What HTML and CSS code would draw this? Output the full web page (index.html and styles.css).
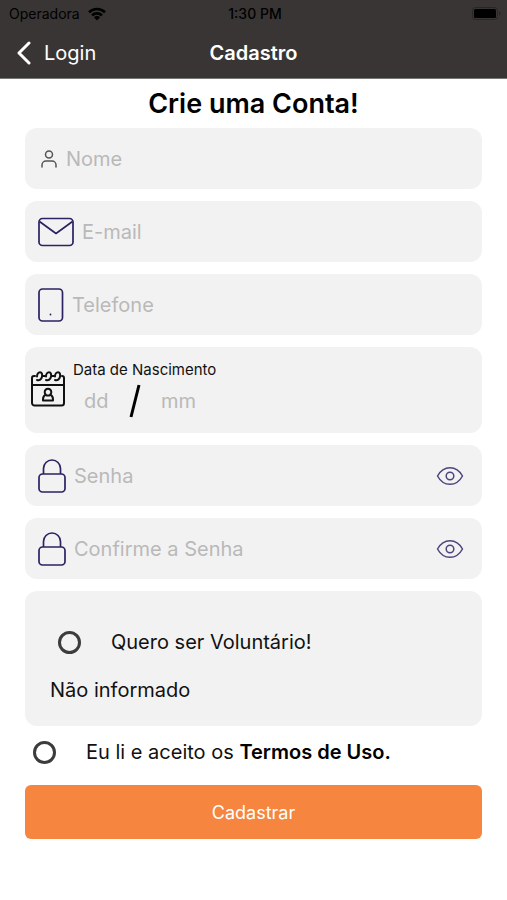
FILE: index.html
```
<!DOCTYPE html>
<html lang="pt-BR">
<head>
    <meta charset="UTF-8">
    <meta name="viewport" content="width=device-width, initial-scale=1.0">
    <title>Cadastro</title>
    <link rel="stylesheet" href="styles.css">
</head>
<body>
    <header class="top">
        <div class="status-bar">
            <span class="carrier">
                Operadora
                <svg width="18" height="14" viewBox="0 0 18 14" fill="none" stroke="currentColor" stroke-width="2.6">
                    <path d="M1 5.2a11.5 11.5 0 0 1 16 0"/>
                    <path d="M4 8.4a7.2 7.2 0 0 1 10 0"/>
                    <path d="M9 13.4L5.9 10.3a4.4 4.4 0 0 1 6.2 0z" fill="currentColor" stroke="none"/>
                </svg>
            </span>
            <span class="time">1:30 PM</span>
            <svg class="battery" width="29" height="14" viewBox="0 0 29 14">
                <rect x="0.5" y="0.5" width="25" height="12" rx="3" fill="none" stroke="#292625"/>
                <rect x="2" y="2" width="22" height="9" rx="1.5" fill="#000"/>
                <path d="M27 4.5c2 .5 2 3.500 0 4z" fill="#292625"/>
            </svg>
        </div>
        <nav class="nav-bar">
            <a href="#login" class="back">
                <svg width="16" height="24" viewBox="0 0 16 24" fill="none" stroke="currentColor" stroke-width="3" stroke-linecap="round" stroke-linejoin="round">
                    <path d="M13 2L3 12l10 10"/>
                </svg>
                Login
            </a>
            <h2>Cadastro</h2>
        </nav>
    </header>

    <main>
        <h1>Crie uma Conta!</h1>
        <form class="form">
            <div class="field">
                <svg class="icon-user" width="18" height="18" viewBox="0 0 18 18" fill="none" stroke="#555" stroke-width="1.5" stroke-linecap="round">
                    <circle cx="9" cy="4.500" r="3.500"/>
                    <path d="M2 17v-2a4 4 0 0 1 4-4h6a4 4 0 0 1 4 4v2"/>
                </svg>
                <input type="text" placeholder="Nome" aria-label="Nome">
            </div>

            <div class="field">
                <svg class="icon-mail" width="36" height="30" viewBox="0 0 36 30" fill="none" stroke="#2b2363" stroke-width="1.7" stroke-linejoin="round">
                    <rect x="1" y="1.500" width="34" height="27" rx="3.500"/>
                    <path d="M1.500 4.500L18 16.500 34.500 4.500"/>
                </svg>
                <input type="email" placeholder="E-mail" aria-label="E-mail">
            </div>

            <div class="field">
                <svg class="icon-phone" width="26" height="34" viewBox="0 0 26 34" fill="none" stroke="#2b2363" stroke-width="1.7">
                    <rect x="1" y="1" width="23.500" height="32" rx="3.500"/>
                    <circle cx="12.500" cy="26.500" r="0.900" fill="#2b2363" stroke="none"/>
                </svg>
                <input type="tel" placeholder="Telefone" aria-label="Telefone">
            </div>

            <div class="field birth">
                <svg width="34" height="36" viewBox="0 0 34 36" fill="none" stroke="#111" stroke-width="2" stroke-linecap="round" stroke-linejoin="round">
                    <path d="M4 5H3a2 2 0 0 0-2 2v25a2.500 2.500 0 0 0 2.500 2.500h27A2.500 2.500 0 0 0 33 32V7a2 2 0 0 0-2-2M1 14h32"/>
                    <path d="M12 5h2M21 5h2"/>
                    <path d="M6 5.500C6 3 7.500 1.300 9 1.300c2 0 2.500 2.200 2 4.500-.5 2.500-2.500 4-5 3.200"/>
                    <path d="M15 5.500c0-2.500 1.500-4.200 3-4.200 2 0 2.500 2.200 2 4.500-.5 2.500-2.500 4-5 3.200"/>
                    <path d="M24 5.500c0-2.500 1.500-4.200 3-4.200 2 0 2.500 2.200 2 4.500-.5 2.500-2.500 4-5 3.200"/>
                    <path d="M14.800 23.500a3.300 3.300 0 1 1 4.400 0c2 1 3 3 2.800 6H12c-.2-3 .8-5 2.800-6z"/>
                    <path d="M15.500 24.500h3"/>
                </svg>
                <div>
                    <label for="day">Data de Nascimento</label>
                    <div class="date-row">
                        <input type="text" id="day" placeholder="dd">
                        <svg width="12" height="34" viewBox="0 0 12 34" stroke="#000" stroke-width="3">
                            <path d="M10 1L2 33"/>
                        </svg>
                        <input type="text" placeholder="mm" aria-label="Mês">
                    </div>
                </div>
            </div>

            <div class="field">
                <svg class="icon-lock" width="28" height="34" viewBox="0 0 28 34" fill="none" stroke="#2b2363" stroke-width="1.7">
                    <rect x="1" y="15" width="26" height="18" rx="3.500"/>
                    <path d="M5.500 15V9.500a8.500 8.500 0 0 1 17 0V15"/>
                </svg>
                <input type="password" placeholder="Senha" aria-label="Senha">
                <button type="button" class="eye" aria-label="Mostrar senha">
                    <svg width="28" height="20" viewBox="0 0 28 20" fill="none" stroke="#4b467c" stroke-width="1.5" stroke-linejoin="round">
                        <path d="M1.500 10C4.500 4.500 9 1.700 14 1.700S23.500 4.500 26.500 10C23.500 15.500 19 18.300 14 18.300S4.500 15.500 1.500 10z"/>
                        <circle cx="14" cy="10" r="3.800"/>
                    </svg>
                </button>
            </div>

            <div class="field">
                <svg class="icon-lock" width="28" height="34" viewBox="0 0 28 34" fill="none" stroke="#2b2363" stroke-width="1.7">
                    <rect x="1" y="15" width="26" height="18" rx="3.500"/>
                    <path d="M5.500 15V9.500a8.500 8.500 0 0 1 17 0V15"/>
                </svg>
                <input type="password" placeholder="Confirme a Senha" aria-label="Confirme a Senha">
                <button type="button" class="eye" aria-label="Mostrar confirmação da senha">
                    <svg width="28" height="20" viewBox="0 0 28 20" fill="none" stroke="#4b467c" stroke-width="1.5" stroke-linejoin="round">
                        <path d="M1.500 10C4.500 4.500 9 1.700 14 1.700S23.500 4.500 26.500 10C23.500 15.500 19 18.300 14 18.300S4.500 15.500 1.500 10z"/>
                        <circle cx="14" cy="10" r="3.800"/>
                    </svg>
                </button>
            </div>

            <div class="volunteer">
                <div class="check">
                    <input type="checkbox" id="volunteer">
                    <label for="volunteer">Quero ser Voluntário!</label>
                </div>
                <p>Não informado</p>
            </div>

            <div class="check terms">
                <input type="checkbox" id="terms">
                <label for="terms">Eu li e aceito os <a href="#termos">Termos de Uso.</a></label>
            </div>

            <button type="submit" class="submit">Cadastrar</button>
        </form>
    </main>
</body>
</html>
```

FILE: styles.css
```
:root {
    --bar-color: #393534;
    --field-color: #f2f2f2;
    --placeholder-color: #b9b9b9;
    --accent-color: #f6863f;
    --text-color: #111;
    --border-radius: 12px;
}

* {
    margin: 0;
    padding: 0;
    box-sizing: border-box;
}

body {
    background-color: white;
    color: var(--text-color);
    font-family: 'Inter', sans-serif;
    font-size: 20px;
    line-height: 24px;
}

svg {
    display: block;
    flex-shrink: 0;
}

a {
    color: inherit;
    text-decoration: none;
}

.top {
    background-color: var(--bar-color);
    border-bottom: 1px solid #777;
}

.status-bar {
    display: grid;
    grid-template-columns: 1fr auto 1fr;
    align-items: center;
    height: 27px;
    padding: 0 6px 0 9px;
    font-size: 14px;
    color: #000;
}

.carrier {
    display: flex;
    align-items: center;
    gap: 8px;
}

.time {
    font-weight: 500;
}

.battery {
    justify-self: end;
}

.nav-bar {
    display: grid;
    grid-template-columns: 1fr auto 1fr;
    align-items: center;
    height: 51px;
    padding: 0 16px;
    color: white;
}

.back {
    display: flex;
    align-items: center;
    gap: 12px;
}

.nav-bar h2 {
    font-size: 20px;
    font-weight: 600;
}

h1 {
    padding: 9px 0 8px;
    font-size: 27px;
    font-weight: 600;
    line-height: 32px;
    text-align: center;
    color: #000;
}

.form {
    display: flex;
    flex-direction: column;
    gap: 12px;
    padding: 0 25px;
}

.field {
    display: flex;
    align-items: center;
    gap: 8px;
    min-height: 61px;
    padding: 0 18px 0 13px;
    border-radius: var(--border-radius);
    background-color: var(--field-color);
}

.field input {
    flex: 1;
    min-width: 0;
    border: none;
    outline: none;
    background: none;
    font: inherit;
    color: var(--text-color);
}

.field input::placeholder {
    color: var(--placeholder-color);
    opacity: 1;
}

.icon-user {
    margin-left: 2px;
}

.field.birth {
    min-height: 86px;
    padding: 0 18px 2px 6px;
}

.birth label {
    display: block;
    font-size: 15px;
    line-height: 20px;
}

.date-row {
    display: flex;
    align-items: center;
    margin-top: 4px;
    padding-left: 11px;
}

.field .date-row input {
    flex: none;
    width: 45px;
}

.date-row svg + input {
    margin-left: 20px;
}

.eye {
    border: none;
    background: none;
    cursor: pointer;
}

.volunteer {
    display: flex;
    flex-direction: column;
    gap: 24px;
    min-height: 135px;
    padding: 39px 25px 24px;
    border-radius: var(--border-radius);
    background-color: var(--field-color);
}

.check {
    display: flex;
    align-items: center;
    gap: 30px;
    padding-left: 8px;
}

.check input {
    appearance: none;
    width: 23px;
    height: 23px;
    border: 3px solid #3c3c3c;
    border-radius: 50%;
}

.check input:checked {
    background-color: var(--accent-color);
}

.check a {
    font-weight: 600;
    color: #000;
}

.terms {
    padding: 2px 0 9px 8px;
}

.submit {
    height: 54px;
    border: none;
    border-radius: 6px;
    background-color: var(--accent-color);
    color: white;
    font-family: inherit;
    font-size: 18px;
    cursor: pointer;
}
```
